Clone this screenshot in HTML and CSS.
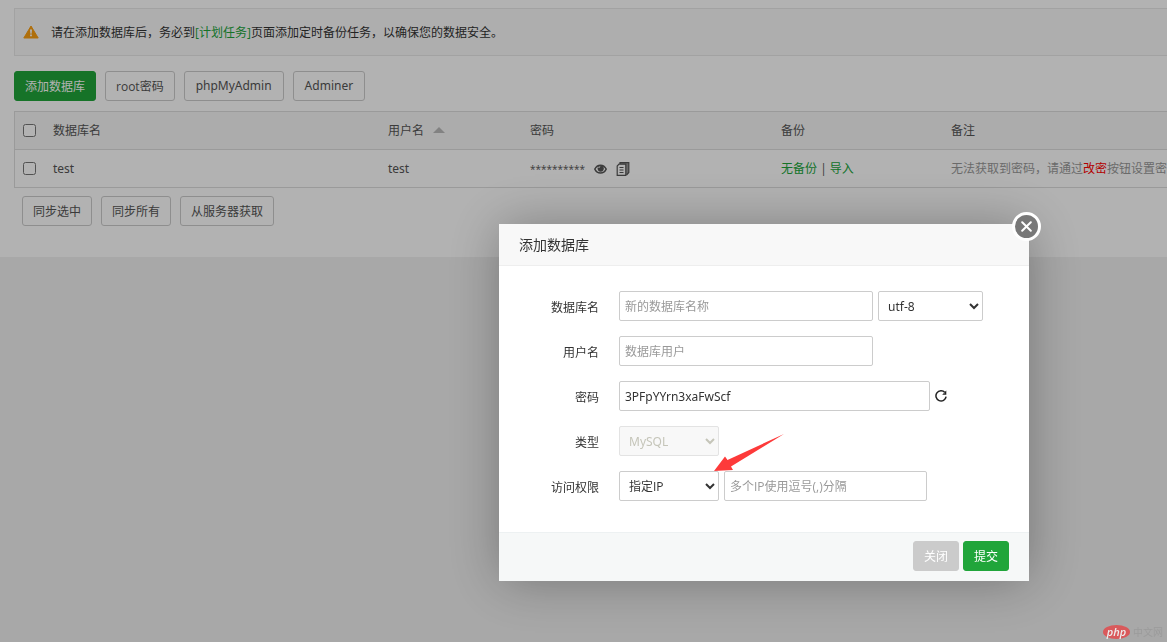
FILE: index.html
```html
<!DOCTYPE html>
<html lang="zh-CN">
<head>
<meta charset="utf-8">
<title>数据库</title>
<link rel="stylesheet" href="styles.css">
</head>
<body>
<main class="page">
  <div class="notice">
    <svg class="notice-icon" width="16" height="14" viewBox="0 0 16 14"><path d="M8 1 15.2 13H.8Z" fill="#fb9f12" stroke="#fb9f12" stroke-linejoin="round"/><path d="M7 4.500h2l-.4 4.200H7.400ZM7.100 9.600h1.800v1.700H7.100Z" fill="#fff"/></svg>
    <p class="notice-text">请在添加数据库后，务必到<a class="link" href="#">[计划任务]</a>页面添加定时备份任务，以确保您的数据安全。</p>
  </div>
  <div class="toolbar">
    <button class="btn btn-primary" type="button">添加数据库</button>
    <button class="btn" type="button">root密码</button>
    <button class="btn latin" type="button">phpMyAdmin</button>
    <button class="btn latin" type="button">Adminer</button>
  </div>
  <table class="table">
    <colgroup><col class="col-check"><col class="col-name"><col class="col-user"><col class="col-pass"><col class="col-backup"><col></colgroup>
    <thead>
      <tr>
        <th><input class="check" type="checkbox" aria-label="全选"></th>
        <th>数据库名</th>
        <th>用户名<span class="sort"></span></th>
        <th>密码</th>
        <th>备份</th>
        <th>备注</th>
      </tr>
    </thead>
    <tbody>
      <tr>
        <td><input class="check" type="checkbox" aria-label="test"></td>
        <td class="latin">test</td>
        <td class="latin">test</td>
        <td>
          <div class="secret">
            <span class="stars">**********</span>
            <svg width="13" height="12" viewBox="0 0 13 12"><path d="M.8 6.100C3.300.9 9.700.9 12.200 6.100 9.700 11.300 3.300 11.300.8 6.100Z" fill="none" stroke="#555" stroke-width="1.400"/><circle cx="6.700" cy="5.600" r="3.100" fill="#555"/><path d="M4.600 5a2 2 0 0 1 1.600-1.400" fill="none" stroke="#fff"/></svg>
            <svg width="14" height="16" viewBox="0 0 14 16"><path d="M4 3V1.700h8.800V11.500L10.500 14" fill="#999" stroke="#555" stroke-width="1.200"/><path d="M3 3.200H9.800V14.300H1.200V5Z" fill="#fff" stroke="#555" stroke-width="1.200"/><path d="M3.500 6.500h4M3.500 9h4M3.500 11.500h4" stroke="#555"/></svg>
          </div>
        </td>
        <td><a class="link" href="#">无备份</a> | <a class="link" href="#">导入</a></td>
        <td class="remark">无法获取到密码，请通过<span class="danger">改密</span>按钮设置密</td>
      </tr>
    </tbody>
  </table>
  <div class="batch">
    <button class="btn" type="button">同步选中</button>
    <button class="btn" type="button">同步所有</button>
    <button class="btn" type="button">从服务器获取</button>
  </div>
</main>

<div class="shade"></div>

<section class="dialog" role="dialog" aria-labelledby="dialog-title">
  <h2 class="dialog-title" id="dialog-title">添加数据库</h2>
  <button class="dialog-close" type="button" aria-label="关闭窗口">
    <svg width="11" height="11" viewBox="0 0 11 11"><path d="M1.200 1.200l8.600 8.600M9.800 1.200l-8.600 8.600" stroke="#fff" stroke-width="2" stroke-linecap="round"/></svg>
  </button>
  <form class="form">
    <div class="row">
      <label class="label" for="db-name">数据库名</label>
      <input class="field field-md" id="db-name" type="text" placeholder="新的数据库名称">
      <select class="field select-md latin" aria-label="编码"><option>utf-8</option></select>
    </div>
    <div class="row">
      <label class="label" for="db-user">用户名</label>
      <input class="field field-md" id="db-user" type="text" placeholder="数据库用户">
    </div>
    <div class="row">
      <label class="label" for="db-pass">密码</label>
      <input class="field field-lg latin" id="db-pass" type="text" value="3PFpYYrn3xaFwScf">
      <button class="refresh" type="button" aria-label="随机密码">
        <svg width="12" height="12" viewBox="0 0 12 12"><path d="M9.900 2.500A5.100 5.100 0 1 0 11.100 6.600" fill="none" stroke="#222" stroke-width="1.500"/><path d="M11.300.5V4.700H7.200L8.600 3.300H10V1.800Z" fill="#222"/></svg>
      </button>
    </div>
    <div class="row">
      <label class="label" for="db-type">类型</label>
      <select class="field select-sm latin" id="db-type" disabled><option>MySQL</option></select>
    </div>
    <div class="row">
      <label class="label" for="db-access">访问权限</label>
      <select class="field select-sm" id="db-access"><option>指定IP</option></select>
      <input class="field field-sm" type="text" aria-label="IP" placeholder="多个IP使用逗号(,)分隔">
    </div>
  </form>
  <footer class="dialog-footer">
    <button class="btn btn-muted" type="button">关闭</button>
    <button class="btn btn-primary" type="button">提交</button>
  </footer>
  <svg class="pointer" width="70" height="38" viewBox="0 0 70 38"><path d="M0 37 11 22.500 13.500 26 70 0 17 32.500 19 36Z" fill="#fd3a3a"/></svg>
</section>

<div class="brand"><span class="brand-php">php</span><span class="brand-name">中文网</span></div>
</body>
</html>
```
FILE: styles.css
```css
* { box-sizing: border-box; }

body {
  margin: 0;
  min-height: 100vh;
  background: #f1f1f1;
  color: #555;
  font: 12px/18px "Open Sans", "Noto Sans CJK SC", sans-serif;
  overflow: hidden;
}

button, input, select { font-family: inherit; font-size: 12px; }
.latin { font-family: "Noto Sans", sans-serif; }

.page {
  background: #fff;
  padding: 8px 0 31px 14px;
}

.notice {
  display: flex;
  align-items: center;
  gap: 12px;
  height: 48px;
  padding-left: 8px;
  background: #fafafa;
  border: 1px solid #e8e8e8;
  border-right: 0;
  color: #333;
}
.notice-text { margin: 0; padding-top: 2px; }
.link { color: #20a53a; text-decoration: none; }

.toolbar { display: flex; gap: 9px; margin: 15px 0 10px; }

.btn {
  height: 30px;
  padding: 2px 10px 0;
  border: 1px solid #ccc;
  border-radius: 3px;
  background: #fff;
  color: #555;
  line-height: 18px;
}
.btn.latin { padding: 0 11px; }
.btn-primary { background: #20a53a; border-color: #20a53a; color: #fff; }
.btn-muted { background: #cbcbcb; border-color: #cbcbcb; color: #fff; }

.table {
  width: 100%;
  table-layout: fixed;
  border-collapse: separate;
  border-spacing: 0;
  border: 1px solid #ddd;
  border-width: 1px 0 0 1px;
}
.col-check { width: 38px; }
.col-name { width: 335px; }
.col-user { width: 142px; }
.col-pass { width: 251px; }
.col-backup { width: 170px; }
.table th, .table td {
  height: 38px;
  padding: 0;
  border-bottom: 1px solid #ddd;
  text-align: left;
  font-weight: 400;
  white-space: nowrap;
}
.table th { background: #f6f6f6; }
.check { display: block; width: 13px; height: 13px; margin: 0 8px; }
.sort {
  display: inline-block;
  margin-left: 9px;
  vertical-align: 2px;
  border: solid transparent;
  border-width: 0 6px 6px;
  border-bottom-color: #bbb;
}
.secret { display: flex; align-items: center; gap: 9px; }
.stars { font-size: 10px; }
.table .remark { color: #999; }
.danger { color: #f00; }

.batch { display: flex; gap: 9px; padding: 8px 8px 0; }

.shade { position: fixed; inset: 0; background: rgba(0, 0, 0, .3); }

.dialog {
  position: fixed;
  top: 224px;
  left: 499px;
  width: 530px;
  background: #fff;
  color: #333;
  box-shadow: 1px 1px 50px rgba(0, 0, 0, .3);
}
.dialog-title {
  margin: 0;
  padding: 0 20px;
  border-bottom: 1px solid #eee;
  background: #f8f8f8;
  font-size: 14px;
  font-weight: 400;
  line-height: 41px;
}
.dialog-close {
  position: absolute;
  top: -12px;
  right: -12px;
  display: grid;
  place-items: center;
  width: 29px;
  height: 29px;
  padding: 0;
  border: 3px solid #fff;
  border-radius: 50%;
  background: #787878;
}

.form { display: grid; gap: 15px; padding: 25px 0 31px; }
.row { display: flex; align-items: center; gap: 5px; }
.label { width: 115px; padding: 3px 15px 0 0; text-align: right; }
.field {
  height: 30px;
  padding: 0 5px;
  border: 1px solid #ccc;
  border-radius: 2px;
  background: #fff;
  color: #333;
}
.field::placeholder { color: #999; }
.field:disabled { background: #f8f8f8; border-color: #e3e3e3; color: #c5c5b9; opacity: 1; }
.field-sm { width: 203px; }
.field-md { width: 254px; }
.field-lg { width: 311px; }
.select-sm { width: 100px; }
.select-md { width: 105px; }
.refresh { display: flex; padding: 0; border: 0; background: none; }

.dialog-footer {
  display: flex;
  justify-content: flex-end;
  gap: 4px;
  padding: 8px 20px 10px;
  border-top: 1px solid #edf1f2;
  background: #f6f8f8;
}
.pointer { position: absolute; top: 210px; left: 215px; }

.brand {
  position: fixed;
  right: 4px;
  bottom: 2px;
  display: flex;
  align-items: center;
  gap: 3px;
  color: #9b9b9b;
  font-size: 10px;
  line-height: 16px;
}
.brand-php {
  width: 27px;
  border-radius: 50%;
  background: #d9595b;
  color: #eee;
  font-size: 11px;
  font-style: italic;
  font-weight: 600;
  line-height: 14px;
  text-align: center;
}
```
